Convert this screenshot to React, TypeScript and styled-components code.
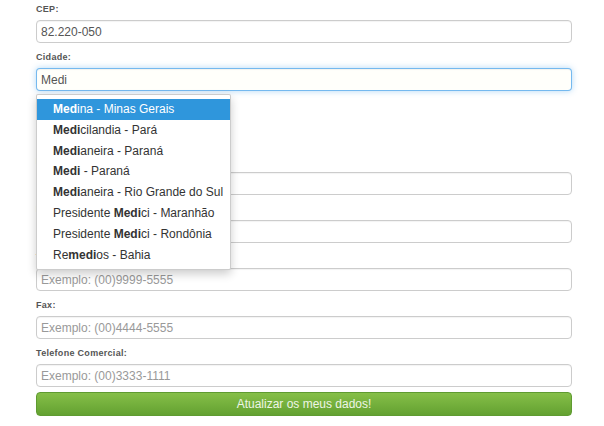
import React from 'react';
import styled, { createGlobalStyle } from 'styled-components';

const GlobalStyle = createGlobalStyle`
  html, body {
    margin: 0;
    padding: 0;
    background: #fff;
    font-family: "Liberation Sans", Arial, sans-serif;
  }
`;

const Form = styled.form`
  width: 536px;
  padding: 3px 0 0 36px;
  display: flex;
  flex-direction: column;
`;

const Field = styled.div`
  position: relative;
  display: flex;
  flex-direction: column;
  margin-bottom: 8px;
`;

const Label = styled.label`
  font-size: 9px;
  line-height: 12px;
  font-weight: bold;
  letter-spacing: 0.3px;
  color: #555;
  margin-bottom: 5px;
`;

const Input = styled.input<{ $focused?: boolean }>`
  box-sizing: border-box;
  width: 100%;
  height: 23px;
  margin: 0;
  padding: 0 4px;
  font-family: "Liberation Sans", Arial, sans-serif;
  font-size: 12px;
  color: #555;
  background: ${p => (p.$focused ? '#fffffb' : '#fff')};
  border: 1px solid ${p => (p.$focused ? 'rgba(82, 168, 236, 0.8)' : '#ccc')};
  border-radius: 4px;
  box-shadow: ${p =>
    p.$focused
      ? 'inset 0 1px 1px rgba(0,0,0,.05), 0 0 6px rgba(82,168,236,.45)'
      : 'inset 0 1px 1px rgba(0,0,0,.05)'};
  outline: none;

  &::placeholder {
    color: #999;
  }
`;

const StateBox = styled.div`
  box-sizing: border-box;
  width: 180px;
  height: 31px;
  border: 1px solid #ccc;
  border-radius: 4px;
`;

const Suggestions = styled.ul`
  position: absolute;
  top: 43px;
  left: 0;
  z-index: 10;
  box-sizing: border-box;
  width: 195px;
  margin: 0;
  padding: 4px 0;
  list-style: none;
  background: #fff;
  border: 1px solid rgba(0, 0, 0, 0.2);
  border-radius: 2px;
  box-shadow: 0 4px 10px rgba(0, 0, 0, 0.2);
`;

const Suggestion = styled.li<{ $active?: boolean }>`
  padding: 3px 16px;
  font-size: 12px;
  line-height: 14.8px;
  white-space: nowrap;
  color: ${p => (p.$active ? '#fff' : '#333')};
  background: ${p => (p.$active ? '#2f96dc' : 'transparent')};

  b {
    font-weight: bold;
  }
`;

const SubmitButton = styled.button`
  box-sizing: border-box;
  width: 100%;
  height: 24px;
  margin-top: -3px;
  padding: 0;
  font-family: "Liberation Sans", Arial, sans-serif;
  font-size: 12px;
  color: #eef5e6;
  background: linear-gradient(to bottom, #86bf48, #63a131);
  border: 1px solid #5f9b31;
  border-radius: 4px;
  cursor: pointer;
`;

const cities: { pre: string; bold: string; post: string }[] = [
  { pre: '', bold: 'Med', post: 'ina - Minas Gerais' },
  { pre: '', bold: 'Medi', post: 'cilandia - Pará' },
  { pre: '', bold: 'Medi', post: 'aneira - Paraná' },
  { pre: '', bold: 'Medi', post: ' - Paraná' },
  { pre: '', bold: 'Medi', post: 'aneira - Rio Grande do Sul' },
  { pre: 'Presidente ', bold: 'Medi', post: 'ci - Maranhão' },
  { pre: 'Presidente ', bold: 'Medi', post: 'ci - Rondônia' },
  { pre: 'Re', bold: 'medi', post: 'os - Bahia' },
];

const App: React.FC = () => {
  return (
    <>
      <GlobalStyle />
      <Form onSubmit={e => e.preventDefault()}>
        <Field>
          <Label>CEP:</Label>
          <Input defaultValue="82.220-050" />
        </Field>
        <Field>
          <Label>Cidade:</Label>
          <Input $focused defaultValue="Medi" />
          <Suggestions>
            {cities.map((c, i) => (
              <Suggestion key={i} $active={i === 0}>
                {c.pre}
                <b>{c.bold}</b>
                {c.post}
              </Suggestion>
            ))}
          </Suggestions>
        </Field>
        <Field>
          <Label>Estado:</Label>
          <StateBox />
        </Field>
        <Field>
          <Label>Endereço:</Label>
          <Input />
        </Field>
        <Field>
          <Label>Bairro:</Label>
          <Input />
        </Field>
        <Field>
          <Label>Telefone:</Label>
          <Input placeholder="Exemplo: (00)9999-5555" />
        </Field>
        <Field>
          <Label>Fax:</Label>
          <Input placeholder="Exemplo: (00)4444-5555" />
        </Field>
        <Field>
          <Label>Telefone Comercial:</Label>
          <Input placeholder="Exemplo: (00)3333-1111" />
        </Field>
        <SubmitButton type="submit">Atualizar os meus dados!</SubmitButton>
      </Form>
    </>
  );
};

export default App;
